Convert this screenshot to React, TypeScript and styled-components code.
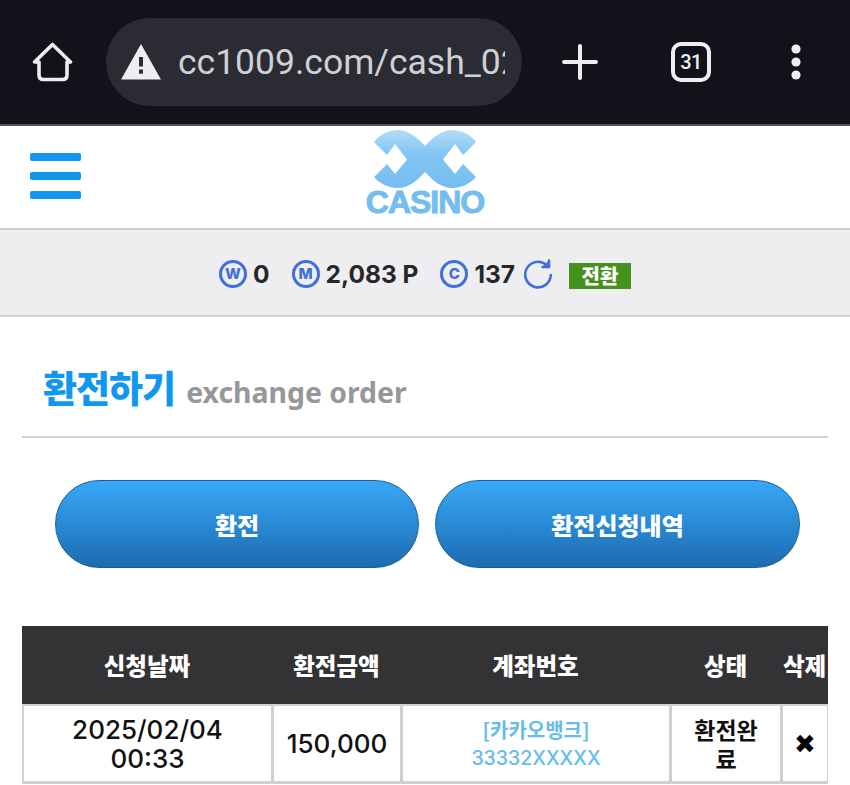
import React from "react";
import styled, { createGlobalStyle } from "styled-components";

const GlobalStyle = createGlobalStyle`
  html, body {
    margin: 0;
    padding: 0;
    background: #fff;
  }
  * {
    box-sizing: border-box;
  }
  body {
    font-family: Inter, "Noto Sans CJK KR", sans-serif;
  }
`;

const HomeIcon = () => (
  <svg width="42" height="40" viewBox="0 0 42 40" fill="none" stroke="#eeeef0" strokeWidth="3.6" strokeLinejoin="round" strokeLinecap="round">
    <path d="M7 20 H2.5 L20.5 2.5 L38.5 20 H35 V33 Q35 37.5 30.5 37.5 H11.5 Q7 37.5 7 33 Z" />
  </svg>
);

const WarningIcon = () => (
  <svg width="40" height="36" viewBox="0 0 40 36">
    <path d="M20 0 L40 35.5 L0 35.5 Z" fill="#eeeef0" />
    <rect x="18" y="13" width="4" height="9.5" fill="#2a2b33" />
    <rect x="18" y="25.5" width="4" height="4.2" fill="#2a2b33" />
  </svg>
);

const PlusIcon = () => (
  <svg width="36" height="36" viewBox="0 0 36 36" stroke="#eeeef0" strokeWidth="4" strokeLinecap="round">
    <path d="M18 2 V34 M2 18 H34" />
  </svg>
);

const DotsIcon = () => (
  <svg width="12" height="36" viewBox="0 0 12 36" fill="#eeeef0">
    <circle cx="6" cy="5" r="4.6" />
    <circle cx="6" cy="18" r="4.6" />
    <circle cx="6" cy="31" r="4.6" />
  </svg>
);

const LogoMark = () => (
  <svg width="102" height="58" viewBox="0 0 102 58">
    <defs>
      <linearGradient id="logoFill" x1="0" y1="0" x2="0" y2="1">
        <stop offset="0" stopColor="#b4dcf8" />
        <stop offset="0.4" stopColor="#84c6f3" />
        <stop offset="1" stopColor="#74bdf0" />
      </linearGradient>
    </defs>
    <path
      fill="url(#logoFill)"
      d="M0 12 C6 4 15 0 24 0 C34 0 43 7 51 16 C59 7 68 0 78 0 C87 0 96 4 102 12 L89 25 L81 14 L69 29.5 L81 44 L89 34 L102 47 C96 54 87 58 78 58 C68 58 59 51 51 42 C43 51 34 58 24 58 C15 58 6 54 0 47 L13 34 L21 44 L33 29.5 L21 14 L13 25 Z"
    />
  </svg>
);

const RefreshIcon = () => (
  <svg width="30" height="30" viewBox="0 0 30 30" fill="none" stroke="#3f6fd8" strokeWidth="2.6" strokeLinecap="round" strokeLinejoin="round">
    <path d="M23.5 6 A12.8 12.8 0 1 0 27.8 16" />
    <path d="M26 1.5 V8 H19.5" fill="#3f6fd8" />
  </svg>
);

const App: React.FC = () => {
  return (
    <Page>
      <GlobalStyle />
      <BrowserBar>
        <HomeSlot>
          <HomeIcon />
        </HomeSlot>
        <UrlPill>
          <WarningIcon />
          <UrlText>cc1009.com/cash_02</UrlText>
        </UrlPill>
        <PlusSlot>
          <PlusIcon />
        </PlusSlot>
        <TabCount>31</TabCount>
        <DotsSlot>
          <DotsIcon />
        </DotsSlot>
      </BrowserBar>

      <SiteHeader>
        <Burger>
          <BurgerLine />
          <BurgerLine />
          <BurgerLine />
        </Burger>
        <Logo>
          <LogoMark />
          <LogoText>CASINO</LogoText>
        </Logo>
      </SiteHeader>

      <BalanceBar>
        <BalanceItem>
          <CoinBadge>W</CoinBadge>
          <BalanceValue>0</BalanceValue>
        </BalanceItem>
        <BalanceItem>
          <CoinBadge>M</CoinBadge>
          <BalanceValue>2,083 P</BalanceValue>
        </BalanceItem>
        <BalanceItem>
          <CoinBadge>C</CoinBadge>
          <BalanceValue>137</BalanceValue>
        </BalanceItem>
        <RefreshSlot>
          <RefreshIcon />
        </RefreshSlot>
        <ConvertTag>전환</ConvertTag>
      </BalanceBar>

      <Content>
        <TitleRow>
          <Title>환전하기</Title>
          <SubTitle>exchange order</SubTitle>
        </TitleRow>

        <ButtonRow>
          <PillButton>환전</PillButton>
          <PillButton>환전신청내역</PillButton>
        </ButtonRow>

        <HistoryTable>
          <colgroup>
            <col width={250} />
            <col width={129} />
            <col width={269} />
            <col width={111} />
            <col width={47} />
          </colgroup>
          <thead>
            <tr>
              <HeadCell>신청날짜</HeadCell>
              <HeadCell>환전금액</HeadCell>
              <HeadCell>계좌번호</HeadCell>
              <HeadCell>상태</HeadCell>
              <HeadCell>삭제</HeadCell>
            </tr>
          </thead>
          <tbody>
            <tr>
              <BodyCell>
                2025/02/04
                <br />
                00:33
              </BodyCell>
              <BodyCell>150,000</BodyCell>
              <BodyCell>
                <BankName>[카카오뱅크]</BankName>
                <AccountNo>33332XXXXX</AccountNo>
              </BodyCell>
              <BodyCell>
                <StatusText>
                  환전완
                  <br />료
                </StatusText>
              </BodyCell>
              <BodyCell>
                <DeleteMark>✖</DeleteMark>
              </BodyCell>
            </tr>
          </tbody>
        </HistoryTable>
      </Content>
    </Page>
  );
};

export default App;

const Page = styled.div`
  width: 850px;
  height: 785px;
  overflow: hidden;
  background: #fff;
`;

const BrowserBar = styled.div`
  height: 126px;
  background: #11121a;
  border-bottom: 2px solid #55565c;
  display: flex;
  align-items: center;
`;

const HomeSlot = styled.div`
  width: 106px;
  padding-left: 32px;
  display: flex;
  align-items: center;
`;

const UrlPill = styled.div`
  width: 416px;
  height: 88px;
  border-radius: 44px;
  background: #2a2b33;
  display: flex;
  align-items: center;
  gap: 17px;
  padding-left: 15px;
`;

const UrlText = styled.div`
  width: 327px;
  overflow: hidden;
  white-space: nowrap;
  font-family: Roboto, sans-serif;
  font-size: 35.5px;
  color: #cfd0d3;
`;

const PlusSlot = styled.div`
  margin-left: 40px;
  display: flex;
`;

const TabCount = styled.div`
  margin-left: 73px;
  width: 40px;
  height: 40px;
  border: 4px solid #eeeef0;
  border-radius: 10px;
  display: flex;
  align-items: center;
  justify-content: center;
  font-family: Roboto, sans-serif;
  font-weight: 500;
  font-size: 20px;
  letter-spacing: -0.5px;
  color: #eeeef0;
`;

const DotsSlot = styled.div`
  margin-left: 79px;
  display: flex;
`;

const SiteHeader = styled.header`
  height: 104px;
  background: #fff;
  border-bottom: 2px solid #cfcfd2;
  position: relative;
  display: flex;
  align-items: flex-start;
  justify-content: center;
  padding-top: 4px;
`;

const Burger = styled.div`
  position: absolute;
  left: 30px;
  top: 27px;
  width: 51px;
  display: flex;
  flex-direction: column;
  gap: 11px;
`;

const BurgerLine = styled.span`
  display: block;
  height: 8px;
  border-radius: 2px;
  background: #1098f0;
`;

const Logo = styled.div`
  display: flex;
  flex-direction: column;
  align-items: center;
`;

const LogoText = styled.div`
  font-family: "Liberation Sans", sans-serif;
  font-weight: 700;
  font-size: 32px;
  line-height: 28px;
  letter-spacing: -1px;
  color: #74bdf0;
  -webkit-text-stroke: 1px #74bdf0;
`;

const BalanceBar = styled.div`
  height: 87px;
  padding-top: 2px;
  background: #eeeef0;
  border-bottom: 2px solid #d2d2d5;
  display: flex;
  align-items: center;
  justify-content: center;
`;

const BalanceItem = styled.div`
  display: flex;
  align-items: center;
  gap: 6px;
  margin-right: 22px;

  &:nth-child(3) {
    margin-right: 8px;
  }
`;

const CoinBadge = styled.span`
  width: 28px;
  height: 28px;
  border-radius: 50%;
  border: 3px solid #3f6fd8;
  display: flex;
  align-items: center;
  justify-content: center;
  font-family: Inter, sans-serif;
  font-weight: 800;
  font-size: 15px;
  color: #3f6fd8;
`;

const BalanceValue = styled.span`
  font-weight: 700;
  font-size: 24.5px;
  color: #27272b;
`;

const RefreshSlot = styled.span`
  display: flex;
  margin-right: 16px;
`;

const ConvertTag = styled.span`
  width: 62px;
  height: 26px;
  margin-top: 4px;
  background: #45911e;
  color: #fff;
  display: flex;
  align-items: center;
  justify-content: center;
  font-family: "Noto Sans CJK KR", sans-serif;
  font-weight: 900;
  font-size: 20px;
`;

const Content = styled.main`
  padding: 0 22px;
`;

const TitleRow = styled.div`
  height: 121px;
  border-bottom: 2px solid #d2d2d5;
  display: flex;
  align-items: baseline;
  gap: 11px;
  padding: 45px 0 0 21px;
`;

const Title = styled.h2`
  margin: 0;
  font-family: "Noto Sans CJK KR", sans-serif;
  font-weight: 900;
  font-size: 37px;
  line-height: 50px;
  letter-spacing: -1px;
  color: #1098f0;
`;

const SubTitle = styled.span`
  font-family: "Noto Sans", sans-serif;
  font-weight: 700;
  font-size: 28.4px;
  color: #97979b;
`;

const ButtonRow = styled.div`
  display: grid;
  grid-template-columns: 364px 365px;
  gap: 16px;
  padding: 42px 0 58px 33px;
`;

const PillButton = styled.button`
  height: 88px;
  border-radius: 44px;
  border: 1px solid #1b5f96;
  background: linear-gradient(to bottom, #38a8f8, #1c6bb0);
  color: #fff;
  font-family: "Noto Sans CJK KR", sans-serif;
  font-weight: 900;
  font-size: 24px;
  padding: 0;
`;

const HistoryTable = styled.table`
  width: 806px;
  table-layout: fixed;
  border-collapse: separate;
  border-spacing: 0;
`;

const HeadCell = styled.th`
  height: 78px;
  padding: 0;
  background: #333235;
  color: #fff;
  font-family: "Noto Sans CJK KR", sans-serif;
  font-weight: 900;
  font-size: 23.5px;
  white-space: nowrap;
  overflow: hidden;
`;

const BodyCell = styled.td`
  height: 80px;
  padding: 0;
  border-style: solid;
  border-color: #cfcfd4;
  border-width: 2px 1px 3px 2px;
  background: #fff;
  text-align: center;
  font-weight: 500;
  font-size: 26px;
  line-height: 29px;
  color: #111;
`;

const BankName = styled.div`
  font-family: "Noto Sans CJK KR", sans-serif;
  font-size: 20px;
  font-weight: 700;
  color: #66bde8;
`;

const AccountNo = styled.div`
  font-size: 19.5px;
  font-weight: 500;
  color: #66bde8;
`;

const StatusText = styled.div`
  font-family: "Noto Sans CJK KR", sans-serif;
  font-size: 23px;
  font-weight: 700;
`;

const DeleteMark = styled.span`
  font-family: "DejaVu Sans", sans-serif;
  font-size: 26px;
  color: #000;
`;
